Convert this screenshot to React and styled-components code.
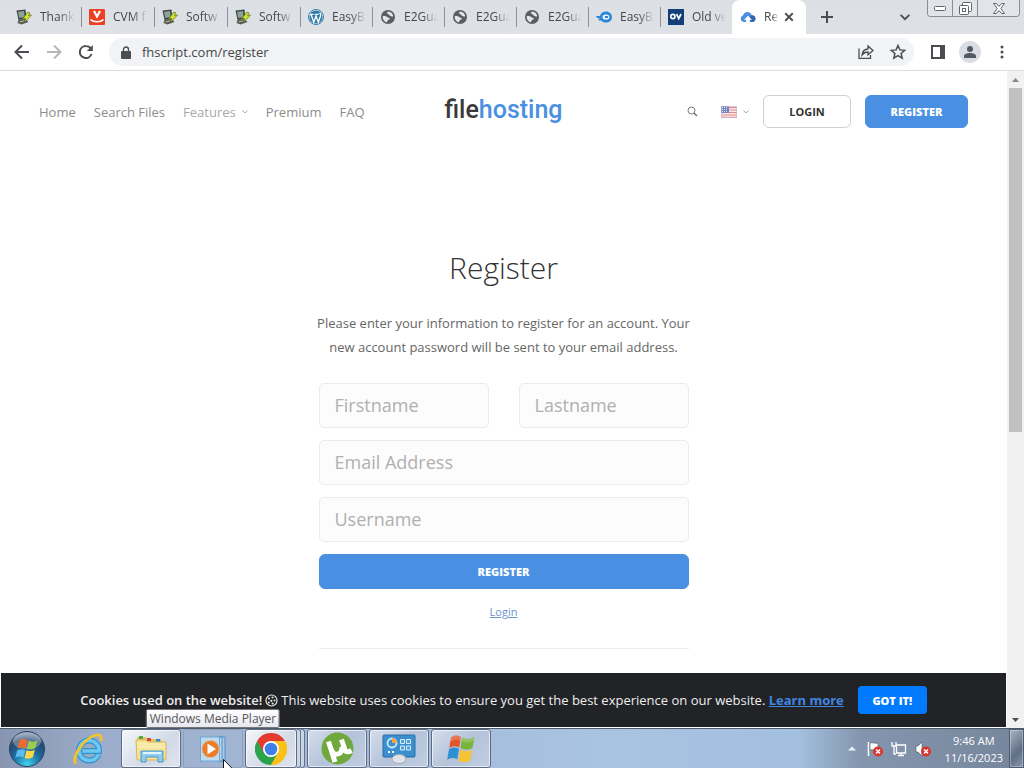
import React from "react";
import styled, { createGlobalStyle, css } from "styled-components";

const GlobalStyle = createGlobalStyle`
  *, *::before, *::after { box-sizing: border-box; }
  html, body { margin: 0; }
  body { font-family: "Open Sans", sans-serif; font-size: 13px; color: #666; }
  button, input { font-family: inherit; margin: 0; }
  svg { display: block; flex: none; }
`;

const ui = `"Open Sans", "Noto Sans", sans-serif`;

const Screen = styled.div`
  display: flex;
  flex-direction: column;
  height: 100vh;
  overflow: hidden;
  background: #fff;
`;

/* ---------- browser chrome ---------- */

const IconButton = styled.button`
  display: flex;
  align-items: center;
  justify-content: center;
  width: ${(p) => p.$w || 32}px;
  height: ${(p) => p.$h || 28}px;
  padding: 0;
  border: 0;
  border-radius: 14px;
  background: none;
  color: ${(p) => p.$color || "#4a4d51"};
`;

const TabStrip = styled.div`
  display: flex;
  align-items: center;
  flex: none;
  height: 34px;
  padding: 0 4px 0 9px;
  background: linear-gradient(#dcdfe4, #dee1e6);
`;

const Tabs = styled.div`
  display: flex;
  align-self: stretch;
  align-items: center;
`;

const Tab = styled.button`
  display: flex;
  align-items: center;
  gap: 8px;
  width: ${(p) => (p.$wide ? 73 : 72)}px;
  height: 20px;
  padding: 0 3px 0 7px;
  border: 0;
  border-right: 1px solid #8b8f95;
  background: none;
  color: #45484c;
  font-family: ${ui};
  font-size: 12px;
  text-align: left;
  ${(p) =>
    p.$last &&
    css`
      width: 71px;
      border-right: 0;
    `}
`;

const ActiveTab = styled.div`
  display: flex;
  align-items: center;
  align-self: stretch;
  width: 74px;
  padding-left: 8px;
  border-radius: 8px 8px 0 0;
  background: #fff;
  color: #45484c;
  font-family: ${ui};
  font-size: 12px;
`;

const TabTitle = styled.span`
  flex: 1;
  min-width: 0;
  white-space: nowrap;
  line-height: 20px;
  mask-image: linear-gradient(to right, #000 50%, transparent 92%);
`;

const ActiveTitle = styled(TabTitle)`
  flex: none;
  width: 16px;
  margin-left: 8px;
`;

const Spacer = styled.div`
  flex: 1;
`;

const WindowControls = styled.div`
  display: flex;
  align-self: flex-start;
  margin-left: 6px;
  border: 1px solid #8a8d94;
  border-top: 0;
  border-radius: 0 0 4px 4px;
  overflow: hidden;
`;

const WindowButton = styled.button`
  display: flex;
  align-items: center;
  justify-content: center;
  width: ${(p) => p.$w}px;
  height: 16px;
  padding: 0;
  border: 0;
  border-right: 1px solid #8a8d94;
  background: #e1e4e9;
  &:last-child {
    border-right: 0;
  }
`;

const Toolbar = styled.div`
  display: flex;
  align-items: center;
  flex: none;
  height: 37px;
  padding: 0 6px;
  border-bottom: 1px solid #dcdcdc;
  background: #fff;
`;

const AddressBar = styled.div`
  display: flex;
  align-items: center;
  flex: 1;
  height: 28px;
  margin: 0 8px 0 7px;
  padding-left: 12px;
  border-radius: 14px;
  background: #f1f3f4;
`;

const Address = styled.label`
  display: flex;
  align-items: center;
  flex: 1;
  gap: 11px;
`;

const AddressInput = styled.input`
  flex: 1;
  padding: 0;
  border: 0;
  outline: 0;
  background: none;
  color: #45484c;
  font-size: 13px;
  line-height: 20px;
`;

/* ---------- web page ---------- */

const Viewport = styled.div`
  display: flex;
  flex: 1;
  min-height: 0;
`;

const Page = styled.div`
  display: flex;
  flex-direction: column;
  flex: 1;
  min-width: 0;
`;

const SiteHeader = styled.header`
  display: grid;
  grid-template-columns: 1fr auto 1fr;
  align-items: center;
  flex: none;
  height: 81px;
  padding: 0 39px;
`;

const Nav = styled.nav`
  display: flex;
  gap: 18px;
`;

const NavLink = styled.a`
  display: flex;
  align-items: center;
  gap: 6px;
  color: ${(p) => (p.$muted ? "#a8a8a8" : "#8c8c8c")};
  font-size: 13px;
  line-height: 20px;
  white-space: nowrap;
  text-decoration: none;
`;

const Logo = styled.a`
  padding-bottom: 4px;
  color: #3a3a3a;
  font-family: Roboto, sans-serif;
  font-size: 25px;
  font-weight: 500;
  line-height: 30px;
  text-decoration: none;
`;

const LogoAccent = styled.span`
  color: #4a90e2;
`;

const Actions = styled.div`
  display: flex;
  align-items: center;
  justify-content: flex-end;
  gap: 14px;
`;

const Language = styled.button`
  display: flex;
  align-items: center;
  gap: 6px;
  margin-left: 8px;
  padding: 0;
  border: 0;
  background: none;
`;

const Button = styled.button`
  height: ${(p) => p.$h || 33}px;
  width: ${(p) => p.$w || "100%"};
  padding: 0;
  border: 1px solid ${(p) => (p.$outline ? "#d0d0d0" : "#4a90e2")};
  border-radius: 6px;
  background: ${(p) => (p.$outline ? "#fff" : "#4a90e2")};
  color: ${(p) => (p.$outline ? "#333" : "#fff")};
  font-size: 11px;
  font-weight: ${(p) => (p.$outline ? 700 : 800)};
`;

const Main = styled.main`
  display: flex;
  justify-content: center;
  flex: 1;
  min-height: 0;
  padding-top: 96px;
`;

const Form = styled.form`
  display: flex;
  flex-direction: column;
  width: 370px;
  text-align: center;
`;

const Title = styled.h1`
  margin: 0;
  color: #333;
  font-size: 30px;
  font-weight: 300;
  line-height: 40px;
`;

const Intro = styled.p`
  margin: 23px -8px 24px;
  color: #666;
  font-size: 13px;
  line-height: 24px;
`;

const Fields = styled.div`
  display: grid;
  grid-template-columns: 1fr 1fr;
  gap: 12px 30px;
`;

const Field = styled.input`
  grid-column: ${(p) => (p.$full ? "1 / -1" : "auto")};
  width: 100%;
  height: 45px;
  padding: 0 15px 2px;
  border: 1px solid #ebebeb;
  border-radius: 5px;
  background: #fcfcfc;
  color: #444;
  font-size: 18px;
  &::placeholder {
    color: #b0b0b0;
    opacity: 1;
  }
`;

const FullRow = styled.div`
  grid-column: 1 / -1;
`;

const LoginLink = styled.a`
  align-self: center;
  margin-top: 13px;
  color: #6e93c8;
  font-size: 11px;
  line-height: 20px;
`;

const Rule = styled.hr`
  width: 100%;
  margin: 26px 0 0;
  border: 0;
  border-top: 1px solid #ebebeb;
`;

const CookieBar = styled.aside`
  display: flex;
  align-items: center;
  justify-content: center;
  flex: none;
  gap: 14px;
  height: 54px;
  margin: 0 1px 1px;
  background: #212327;
  color: #eee;
  font-size: 13px;
  line-height: 20px;
`;

const CookieText = styled.p`
  display: flex;
  align-items: center;
  gap: 3px;
  margin: 0;
  white-space: nowrap;
`;

const CookieLead = styled.strong`
  font-weight: 600;
`;

const CookieLink = styled.a`
  color: #4285e0;
  font-weight: 700;
`;

const Accept = styled.button`
  width: 69px;
  height: 28px;
  padding: 0;
  border: 0;
  border-radius: 4px;
  background: #007bff;
  color: #fff;
  font-size: 11px;
  font-weight: 800;
`;

const ScrollTrack = styled.div`
  display: flex;
  flex-direction: column;
  align-items: center;
  justify-content: space-between;
  flex: none;
  width: 17px;
  padding: 7px 0 6px;
  background: #f1f1f1;
`;

const ScrollThumb = styled.div`
  flex: 0 1 344px;
  width: 13px;
  margin: 6px 0 auto;
  background: #c1c1c1;
`;

/* ---------- desktop taskbar ---------- */

const Taskbar = styled.footer`
  display: flex;
  align-items: stretch;
  flex: none;
  height: 40px;
  border-top: 1px solid #4f5a69;
  background: linear-gradient(
    to right,
    #8795b1 0%,
    #9badca 10%,
    #a5b9d8 30%,
    #a9c3e2 60%,
    #a3bfdf 78%,
    #8496ae 84%,
    #76859b 100%
  );
`;

const TaskButtons = styled.div`
  display: flex;
  flex: 1;
  gap: 2px;
`;

const TaskButton = styled.button`
  position: relative;
  display: flex;
  align-items: center;
  justify-content: center;
  width: ${(p) => p.$w || 60}px;
  padding: 0;
  border: 1px solid transparent;
  border-radius: 3px;
  background: none;
  ${(p) =>
    p.$open &&
    css`
      border-color: #5d6b82;
      background: linear-gradient(135deg, #d5deec, #b4c3da 50%, #c0cde1);
      box-shadow: inset 0 0 0 1px rgba(255, 255, 255, 0.6);
    `}
  ${(p) =>
    p.$bright &&
    css`
      background: linear-gradient(135deg, #f5f7fa, #d2dae7 60%, #dde4ee);
    `}
  ${(p) =>
    p.$hover &&
    css`
      border-color: #91a0ba;
    `}
`;

const ChromeGroup = styled.div`
  display: flex;
`;

const StackEdge = styled.span`
  width: 4px;
  border: 1px solid #67758c;
  border-left: 0;
  border-radius: 0 3px 3px 0;
  background: #ccd6e5;
`;

const Tooltip = styled.span`
  position: absolute;
  z-index: 2;
  bottom: 39px;
  left: 50%;
  transform: translateX(-50%);
  padding: 0 3px;
  border: 1px solid #767676;
  border-radius: 2px;
  background: linear-gradient(#fff, #e6e7f0);
  color: #575757;
  font-family: ${ui};
  font-size: 12px;
  line-height: 17px;
  white-space: nowrap;
`;

const Cursor = styled.svg`
  position: absolute;
  z-index: 3;
  top: 29px;
  left: 39px;
`;

const Tray = styled.div`
  display: flex;
  align-items: center;
  gap: 8px;
`;

const TrayArrow = styled.svg`
  margin-right: 3px;
`;

const Clock = styled.time`
  margin: 0 6px;
  color: #fff;
  font-family: ${ui};
  font-size: 11px;
  line-height: 17px;
  text-align: center;
  white-space: nowrap;
`;

const ShowDesktop = styled.button`
  width: 15px;
  padding: 0;
  border: 1px solid #4e5c70;
  background: linear-gradient(135deg, #a7b3c3, #5f6f85 60%, #8795a9);
  box-shadow: inset 0 0 0 1px rgba(255, 255, 255, 0.3);
`;

/* ---------- icons ---------- */

const ServerIcon = () => (
  <svg width="16" height="16" viewBox="0 0 16 16">
    <path d="M.5 1.500l9-1 1 9.500-8 1z" fill="#3c4245" />
    <path d="M2 2.800l6-.7.700 6.200-5.500.7z" fill="#8ba394" />
    <path d="M2.500 11l7-1 3 3-7 2.500-4-1.500z" fill="#555b50" />
    <path d="M3.500 13l5-1.200" stroke="#b9bdaa" />
    <path d="M12 3l2 1-1.500 2.500 3-.5-6.500 7 .5-3.500-3 .5z" fill="#cfe62a" stroke="#5b6d18" strokeWidth=".7" />
  </svg>
);

const CvmIcon = () => (
  <svg width="16" height="16" viewBox="0 0 16 16">
    <rect width="16" height="16" rx="1" fill="#ec3f24" />
    <path d="M5 2l3 5.500L11 2" fill="none" stroke="#fff" strokeWidth="2.200" />
    <path d="M1.500 10.500c3 3 10 3 13 0" fill="none" stroke="#fff" strokeWidth="1.700" />
  </svg>
);

const WordPressIcon = () => (
  <svg width="16" height="16" viewBox="0 0 16 16">
    <circle cx="8" cy="8" r="7.500" fill="#fff" stroke="#2f7ba5" />
    <circle cx="8" cy="8" r="6.600" fill="#2f7ba5" />
    <path d="M1.800 5.300h3.700M6.800 5.300h3.900M3 5.500l2.800 7.700L8 7l2.300 6.200 2.300-6.500c.4-1.400-.5-2-.8-3" fill="none" stroke="#fff" strokeWidth="1.300" />
  </svg>
);

const GlobeIcon = () => (
  <svg width="16" height="16" viewBox="0 0 16 16">
    <circle cx="8" cy="8" r="7" fill="#5b5e62" />
    <path d="M2.800 7c2 0 2.700 0 4 .8 1.300.8 1.200 1 2.400 1.100 1 .2.600 1.700-.7 1.900-.7 0-.9 1.200-1.500 2.400C4.200 13 2.400 10 2.800 7zM8 2.600c-1.300.9-1.200 2.400.2 2.400 1 .1.600 1.500 1.800 1.700 1.100.1 1.300.9 3.200.7C13 5 11 2.900 8 2.600z" fill="#e3e5e8" />
  </svg>
);

const FishIcon = () => (
  <svg width="16" height="16" viewBox="0 0 16 16">
    <path d="M0 7h4c.5-2.800 3-4.600 6-4.600 3.500 0 6 2.500 6 5.600s-2.500 5.600-6 5.600c-2 0-3.800-.9-4.900-2.200H2.500c0-1 .7-1.500 1.700-1.700C2 9.600.5 8.800 0 7z" fill="#2d87d8" />
    <ellipse cx="10" cy="8" rx="3.400" ry="2.600" fill="#fff" />
    <ellipse cx="10.500" cy="8" rx="1.900" ry="1.300" fill="#2d87d8" />
  </svg>
);

const OvIcon = () => (
  <svg width="16" height="16" viewBox="0 0 16 16">
    <rect width="16" height="16" fill="#123f7a" />
    <circle cx="4.900" cy="7.500" r="2.100" fill="none" stroke="#fff" strokeWidth="1.600" />
    <path d="M8.500 5l2.200 4.600L13 5" fill="none" stroke="#fff" strokeWidth="1.700" />
  </svg>
);

const CloudUpIcon = () => (
  <svg width="16" height="16" viewBox="0 0 16 16">
    <path d="M3.500 13A3.300 3.300 0 013 6.600C3.500 4.300 5.300 3 7.500 3c2.200 0 3.800 1.300 4.300 3.200C14 6.400 15.500 7.800 15.500 9.700S14 13 12.300 13z" fill="#4a8fe0" />
    <path d="M11.800 6.200C14 6.400 15.500 7.800 15.500 9.700S14 13 12.300 13H11L9.500 8z" fill="#3264b4" />
    <path d="M8 6.800l4 4H9.800V13H6.200v-2.200H4z" fill="#fff" />
  </svg>
);

const Line = ({ size = 16, w = 2, children }) => (
  <svg width={size} height={size} viewBox="0 0 16 16" fill="none" stroke="currentColor" strokeWidth={w}>
    {children}
  </svg>
);

const CaretIcon = () => (
  <svg width="6" height="4" viewBox="0 0 6 4" fill="none" stroke="#aaa">
    <path d="M.5.500L3 3 5.500.5" />
  </svg>
);

const FlagIcon = () => (
  <svg width="16" height="12" viewBox="0 0 16 12">
    <rect width="16" height="12" fill="#f7e9ea" />
    <path d="M0 1.500h16M0 4h16M0 6.500h16M0 9h16M0 11.300h16" stroke="#e8878a" />
    <rect width="8" height="7" fill="#7486c4" />
    <path d="M1 1.500h6M1 3.500h6M1 5.500h6" stroke="#d6dcf2" strokeDasharray="1 1" />
    <rect x=".5" y=".5" width="15" height="11" fill="none" stroke="#c4b7c8" strokeOpacity=".6" />
  </svg>
);

const CookieIcon = () => (
  <svg width="13" height="13" viewBox="0 0 13 13">
    <circle cx="6.500" cy="6.500" r="5.500" fill="none" stroke="#e8e8e8" strokeWidth="1.200" />
    <g fill="#e8e8e8">
      <circle cx="4" cy="4.500" r="1.100" />
      <circle cx="7.500" cy="3.500" r="1" />
      <circle cx="9.500" cy="6.500" r="1" />
      <circle cx="6.300" cy="6.800" r="1.100" />
      <circle cx="3.800" cy="8.500" r="1" />
      <circle cx="7.600" cy="9.500" r="1.100" />
    </g>
  </svg>
);

const WindowsFlag = () => (
  <svg width="30" height="30" viewBox="0 0 30 30">
    <path d="M5 3.500C8.500.8 11.500 1 15 3l-1.800 10.500C10 11.500 7 11.800 3.300 14z" fill="#e2552b" />
    <path d="M16.200 3.600c4 2 7.500 1.800 12.300-.6l-2 11c-4.500 2.300-8 2.300-12 0z" fill="#79b33c" />
    <path d="M3 15.200c3.500-2.200 6.700-2.300 10-.4l-1.800 10.700c-3.200-2-6.300-1.900-10 .3z" fill="#2f8fd3" />
    <path d="M14.200 15.500c4 2.200 7.600 2.200 12-.1l-2 11.200c-4.500 2.500-8 2.200-11.800 0z" fill="#f6c333" />
    <path d="M5 3.500C8.500.8 11.500 1 15 3l-.7 4C11 5.200 8 5.300 4.400 7.300zM16.200 3.600c4 2 7.500 1.800 12.300-.6l-.7 3.800c-4.600 2.200-8.200 2.300-12.200.4z" fill="#fff" opacity=".2" />
  </svg>
);

const StartOrb = () => (
  <svg width="38" height="38" viewBox="0 0 38 38">
    <defs>
      <radialGradient id="orb" cx=".5" cy=".95" r=".9">
        <stop offset="0" stopColor="#43d3f2" />
        <stop offset=".45" stopColor="#1b6da2" />
        <stop offset=".8" stopColor="#27496f" />
        <stop offset="1" stopColor="#8295ac" />
      </radialGradient>
    </defs>
    <circle cx="19" cy="19" r="17.500" fill="url(#orb)" stroke="#29435f" />
    <ellipse cx="19" cy="11" rx="14" ry="8.500" fill="#fff" opacity=".28" />
    <path d="M11.500 10.500c3-2.200 5.500-1.500 8 0l-1.800 8c-3-1.300-5-1.200-8.200.3z" fill="#ef6a2c" />
    <path d="M20.700 11c3 1.200 5.500 1 8.800-.8l-2.200 8c-3 1.700-5.400 1.700-8.400.6z" fill="#9ccb4d" />
    <path d="M9.200 20.200c3-1.500 5.300-1.300 8.200-.2l-1.900 7.500c-3-1.300-5-1.200-8.200.4z" fill="#5cbcf0" />
    <path d="M18.500 20.300c3 1.200 5.500 1.100 8.400-.5l-2 7.500c-3 1.700-5.300 1.800-8.300.6z" fill="#fcd548" />
  </svg>
);

const IeIcon = () => (
  <svg width="34" height="34" viewBox="0 0 34 34">
    <path d="M27.500 22.500C25.800 26 22 28.500 18 28.500c-5.500 0-10-4.500-10-10S12.500 8.500 18 8.500 28.500 13 28 19H12" fill="none" stroke="#2f93cf" strokeWidth="6" />
    <path d="M27.500 22.500C25.800 26 22 28.500 18 28.500c-5.500 0-10-4.500-10-10S12.500 8.500 18 8.500 28.500 13 28 19H12" fill="none" stroke="#6cc8f0" strokeWidth="3.600" />
    <path d="M5 31.500C0 27 11 8 23.500 3.500c5-1.800 8 .3 6.500 5.500" fill="none" stroke="#f0c32f" strokeWidth="2.800" />
  </svg>
);

const FolderIcon = () => (
  <svg width="34" height="32" viewBox="0 0 34 32">
    <path d="M3 4h9l1 2h14l1 3v16H3z" fill="#e4c566" />
    <path d="M5 3h4v3H5z" fill="#52a948" />
    <path d="M13 5h4v3h-4z" fill="#d9463a" />
    <path d="M22 6h4v3h-4z" fill="#3a86d6" />
    <path d="M2 7h10l2 2h18v18H3z" fill="#f7e49b" stroke="#d6b75a" />
    <path d="M4 11h27M4 14h27" stroke="#fdf4c8" />
    <path d="M7 18h22v11h-5v-5H12v5H7z" fill="#8fcdf0" stroke="#4a95c7" />
    <path d="M9 20h18" stroke="#e4f6ff" strokeWidth="2" />
  </svg>
);

const MediaPlayerIcon = () => (
  <svg width="26" height="26" viewBox="0 0 26 26">
    <path d="M20 1h5v24h-5" fill="#a8cce8" stroke="#4d8fc6" />
    <path d="M17 1h5v24h-5" fill="#b9d8ef" stroke="#4d8fc6" />
    <rect x=".5" y="1" width="19" height="24" fill="#bfdbf0" stroke="#6da8d6" />
    <circle cx="10.500" cy="13" r="8.800" fill="#ec7c26" stroke="#d4cfcb" />
    <path d="M7.500 7.500v11l8.500-5.500z" fill="#fff" />
  </svg>
);

const ChromeIcon = () => (
  <svg width="32" height="32" viewBox="0 0 32 32">
    <path d="M16 16L2.140 8A16 16 0 0129.860 8z" fill="#e33b2e" />
    <path d="M16 16L29.860 8A16 16 0 0116 32z" fill="#fbc116" />
    <path d="M16 16V32A16 16 0 012.140 8z" fill="#2ba24c" />
    <path d="M23 20l-7 12-7-12z" fill="#2ba24c" />
    <path d="M23 20L16 32A16 16 0 0029.860 8H16z" fill="#fbc116" />
    <path d="M9 20L2.140 8 16 8z" fill="#e33b2e" />
    <circle cx="16" cy="16" r="8" fill="#fff" />
    <circle cx="16" cy="16" r="6.300" fill="#3f7fe8" />
  </svg>
);

const TorrentIcon = () => (
  <svg width="33" height="33" viewBox="0 0 33 33">
    <circle cx="16.500" cy="16.500" r="16" fill="#6fa83b" />
    <path d="M7.500 9.500l6.500 20.500M10 17c1.500 4.500 4 6 7 5 3.500-1.200 4.800-3.500 3.600-7.500" fill="none" stroke="#fff" strokeWidth="5" />
    <path d="M20.500 7.500l3.500 10.500c.7 2.200 3 2.500 6.500.5" fill="none" stroke="#fff" strokeWidth="5" />
  </svg>
);

const ControlPanelIcon = () => (
  <svg width="34" height="30" viewBox="0 0 34 30">
    <rect x="1" y="1" width="32" height="22" rx="1" fill="#3b8fce" stroke="#2b6ca6" />
    <circle cx="10" cy="9" r="4.500" fill="none" stroke="#cfeafa" strokeWidth="1.800" />
    <path d="M10 9V4a5 5 0 015 5z" fill="#f0a646" />
    <path d="M18.500 5.500h4v4h-4zM24.500 5.500h4v4h-4zM18.500 12h4v4h-4zM24.500 12h4v4h-4z" fill="#4aa2dc" stroke="#d8eefb" />
    <path d="M6 18h2M10 18h2" stroke="#fff" strokeWidth="2" />
    <ellipse cx="17" cy="25" rx="7" ry="4.500" fill="#dfe3e8" stroke="#a3a9b0" />
  </svg>
);

const ErrorBadge = () => (
  <g>
    <circle cx="11" cy="10.500" r="5" fill="#d8352c" />
    <path d="M9 8.500l4 4M13 8.500l-4 4" stroke="#fff" strokeWidth="1.500" />
  </g>
);

const plainTabs = [
  ["Thank", ServerIcon],
  ["CVM f", CvmIcon],
  ["Softw", ServerIcon],
  ["Softw", ServerIcon],
  ["EasyB", WordPressIcon],
  ["E2Gua", GlobeIcon],
  ["E2Gua", GlobeIcon],
  ["E2Gua", GlobeIcon],
  ["EasyB", FishIcon],
  ["Old ve", OvIcon],
];

const fields = [
  ["Firstname", "text", false],
  ["Lastname", "text", false],
  ["Email Address", "email", true],
  ["Username", "text", true],
];

function BrowserTabs() {
  return (
    <TabStrip>
      <Tabs>
        {plainTabs.map(([title, Icon], i) => (
          <Tab key={i} $wide={i < 4} $last={i === plainTabs.length - 1}>
            <Icon />
            <TabTitle>{title}</TabTitle>
          </Tab>
        ))}
        <ActiveTab>
          <CloudUpIcon />
          <ActiveTitle>Re</ActiveTitle>
          <IconButton $w={18} $h={20} aria-label="Close tab">
            <Line size={12} w={2.4}><path d="M3 3l10 10M13 3L3 13" /></Line>
          </IconButton>
        </ActiveTab>
      </Tabs>
      <IconButton $w={42} aria-label="New tab">
        <Line><path d="M8 2v12M2 8h12" /></Line>
      </IconButton>
      <Spacer />
      <IconButton aria-label="Search tabs">
        <Line size={14}><path d="M3 5.500l5 5 5-5" /></Line>
      </IconButton>
      <WindowControls>
        <WindowButton $w={25} aria-label="Minimize">
          <svg width="12" height="5" viewBox="0 0 12 5"><rect x=".5" y=".5" width="11" height="4" rx="1" fill="#fff" stroke="#62656b" /></svg>
        </WindowButton>
        <WindowButton $w={25} aria-label="Restore">
          <svg width="13" height="13" viewBox="0 0 13 13" fill="#fff" stroke="#62656b">
            <rect x="3.500" y=".5" width="9" height="9" rx="1" />
            <rect x=".5" y="3.500" width="9" height="9" rx="1" />
            <rect x="3.500" y="6.500" width="3" height="3" />
          </svg>
        </WindowButton>
        <WindowButton $w={41} aria-label="Close">
          <svg width="12" height="11" viewBox="0 0 12 11">
            <path d="M.5.500h3L6 3.500 8.500.500h3L7.800 5.500l3.700 5h-3L6 7.500l-2.500 3h-3l3.700-5z" fill="#fff" stroke="#62656b" />
          </svg>
        </WindowButton>
      </WindowControls>
    </TabStrip>
  );
}

function BrowserToolbar() {
  return (
    <Toolbar>
      <IconButton aria-label="Back">
        <Line><path d="M15 8H2M8 1.500L1.500 8 8 14.500" /></Line>
      </IconButton>
      <IconButton $color="#b5b7ba" aria-label="Forward">
        <Line><path d="M1 8h13M8 1.500L14.500 8 8 14.500" /></Line>
      </IconButton>
      <IconButton aria-label="Reload">
        <Line><path d="M13.500 10A6 6 0 118 2c2.200 0 3.700 1 5 2.500" /><path d="M14.800 1v6h-6z" fill="currentColor" stroke="none" /></Line>
      </IconButton>
      <AddressBar>
        <Address>
          <svg width="10" height="13" viewBox="0 0 10 13">
            <rect y="5" width="10" height="8" rx="1" fill="#4a4d51" />
            <path d="M2.500 5.500v-2a2.500 2.500 0 015 0v2" fill="none" stroke="#4a4d51" strokeWidth="1.400" />
          </svg>
          <AddressInput aria-label="Address" defaultValue="fhscript.com/register" />
        </Address>
        <IconButton aria-label="Share">
          <Line w={1.3}><path d="M1 4.500v9.800h11.500V11M4 11c.5-4 2.500-5.800 6-6V2l5 4.500-5 4.300V8c-3 0-4.500 1-6 3z" /></Line>
        </IconButton>
        <IconButton aria-label="Bookmark">
          <Line w={1.5}><path d="M8 1.500l1.900 4.400 4.800.4-3.600 3.200 1.100 4.700L8 11.700l-4.200 2.500 1.100-4.700L1.300 6.300l4.800-.4z" /></Line>
        </IconButton>
      </AddressBar>
      <IconButton aria-label="Side panel">
        <svg width="14" height="14" viewBox="0 0 14 14"><rect x="1" y="1" width="12" height="12" fill="none" stroke="#4a4d51" strokeWidth="2" /><path d="M9 0h5v14H9z" fill="#4a4d51" /></svg>
      </IconButton>
      <IconButton aria-label="Profile">
        <svg width="22" height="22" viewBox="0 0 22 22"><circle cx="11" cy="11" r="11" fill="#dadee4" /><circle cx="11" cy="8" r="3" fill="#505966" /><path d="M5 17v-2c0-2 3-3 6-3s6 1 6 3v2z" fill="#505966" /></svg>
      </IconButton>
      <IconButton aria-label="Menu">
        <svg width="4" height="14" viewBox="0 0 4 14" fill="#4a4d51"><circle cx="2" cy="2" r="1.500" /><circle cx="2" cy="7" r="1.500" /><circle cx="2" cy="12" r="1.500" /></svg>
      </IconButton>
    </Toolbar>
  );
}

function WebPage() {
  return (
    <Page>
      <SiteHeader>
        <Nav>
          <NavLink href="#home">Home</NavLink>
          <NavLink href="#search">Search Files</NavLink>
          <NavLink href="#features" $muted>Features <CaretIcon /></NavLink>
          <NavLink href="#premium">Premium</NavLink>
          <NavLink href="#faq">FAQ</NavLink>
        </Nav>
        <Logo href="#home">file<LogoAccent>hosting</LogoAccent></Logo>
        <Actions>
          <IconButton $w={12} aria-label="Search">
            <svg width="12" height="12" viewBox="0 0 12 12" fill="none" stroke="#777"><circle cx="4.500" cy="4.500" r="3.500" /><path d="M7 7l3 3" strokeWidth="1.600" /></svg>
          </IconButton>
          <Language aria-label="Language"><FlagIcon /><CaretIcon /></Language>
          <Button type="button" $outline $w="88px">LOGIN</Button>
          <Button type="button" $w="103px">REGISTER</Button>
        </Actions>
      </SiteHeader>
      <Main>
        <Form onSubmit={(e) => e.preventDefault()}>
          <Title>Register</Title>
          <Intro>Please enter your information to register for an account. Your new account password will be sent to your email address.</Intro>
          <Fields>
            {fields.map(([label, type, full]) => (
              <Field key={label} type={type} placeholder={label} aria-label={label} $full={full} />
            ))}
            <FullRow><Button type="submit" $h={35}>REGISTER</Button></FullRow>
          </Fields>
          <LoginLink href="#login">Login</LoginLink>
          <Rule />
        </Form>
      </Main>
      <CookieBar>
        <CookieText>
          <CookieLead>Cookies used on the website!</CookieLead>
          <CookieIcon />
          <span>This website uses cookies to ensure you get the best experience on our website. <CookieLink href="#cookies">Learn more</CookieLink></span>
        </CookieText>
        <Accept>GOT IT!</Accept>
      </CookieBar>
    </Page>
  );
}

function DesktopBar() {
  return (
    <Taskbar>
      <TaskButtons>
        <TaskButton $w={54} aria-label="Start"><StartOrb /></TaskButton>
        <TaskButton $w={63} aria-label="Internet Explorer"><IeIcon /></TaskButton>
        <TaskButton $open $bright aria-label="Explorer"><FolderIcon /></TaskButton>
        <TaskButton $hover>
          <MediaPlayerIcon />
          <Tooltip role="tooltip">Windows Media Player</Tooltip>
          <Cursor width="12" height="19" viewBox="0 0 12 19"><path d="M.5.500v15l3.500-3.300 2.300 5.300 2.200-1-2.300-5h5z" fill="#fff" stroke="#111" /></Cursor>
        </TaskButton>
        <ChromeGroup>
          <TaskButton $open $bright $w={52} aria-label="Chrome"><ChromeIcon /></TaskButton>
          <StackEdge />
          <StackEdge />
        </ChromeGroup>
        <TaskButton $open aria-label="Torrent"><TorrentIcon /></TaskButton>
        <TaskButton $open aria-label="Control Panel"><ControlPanelIcon /></TaskButton>
        <TaskButton $open aria-label="Windows"><WindowsFlag /></TaskButton>
      </TaskButtons>
      <Tray>
        <TrayArrow width="8" height="5" viewBox="0 0 8 5"><path d="M0 4.500L4 .5l4 4z" fill="#eef2f6" /></TrayArrow>
        <svg width="16" height="16" viewBox="0 0 16 16"><path d="M1.500 1v14" stroke="#fff" strokeWidth="1.500" /><path d="M3 2c3-1 4 1 8 0v7c-4 1-5-1-8 0z" fill="#fff" stroke="#46566b" strokeWidth=".6" /><ErrorBadge /></svg>
        <svg width="16" height="16" viewBox="0 0 16 16" fill="none" stroke="#fff" strokeWidth="1.300"><path d="M5.500 4h9v8h-9zM7 14.500h6M10 12v2M1 1v4h4V1M3 5v8h2" /></svg>
        <svg width="16" height="16" viewBox="0 0 16 16"><path d="M1 5h2l4-4v14l-4-4H1z" fill="#fff" stroke="#46566b" strokeWidth=".6" /><ErrorBadge /></svg>
        <Clock>9:46 AM<br />11/16/2023</Clock>
      </Tray>
      <ShowDesktop aria-label="Show desktop" />
    </Taskbar>
  );
}

export default function App() {
  return (
    <Screen>
      <GlobalStyle />
      <BrowserTabs />
      <BrowserToolbar />
      <Viewport>
        <WebPage />
        <ScrollTrack>
          <svg width="7" height="4" viewBox="0 0 7 4"><path d="M0 4l3.500-4L7 4z" fill="#888" /></svg>
          <ScrollThumb />
          <svg width="7" height="4" viewBox="0 0 7 4"><path d="M0 0l3.500 4L7 0z" fill="#505050" /></svg>
        </ScrollTrack>
      </Viewport>
      <DesktopBar />
    </Screen>
  );
}
